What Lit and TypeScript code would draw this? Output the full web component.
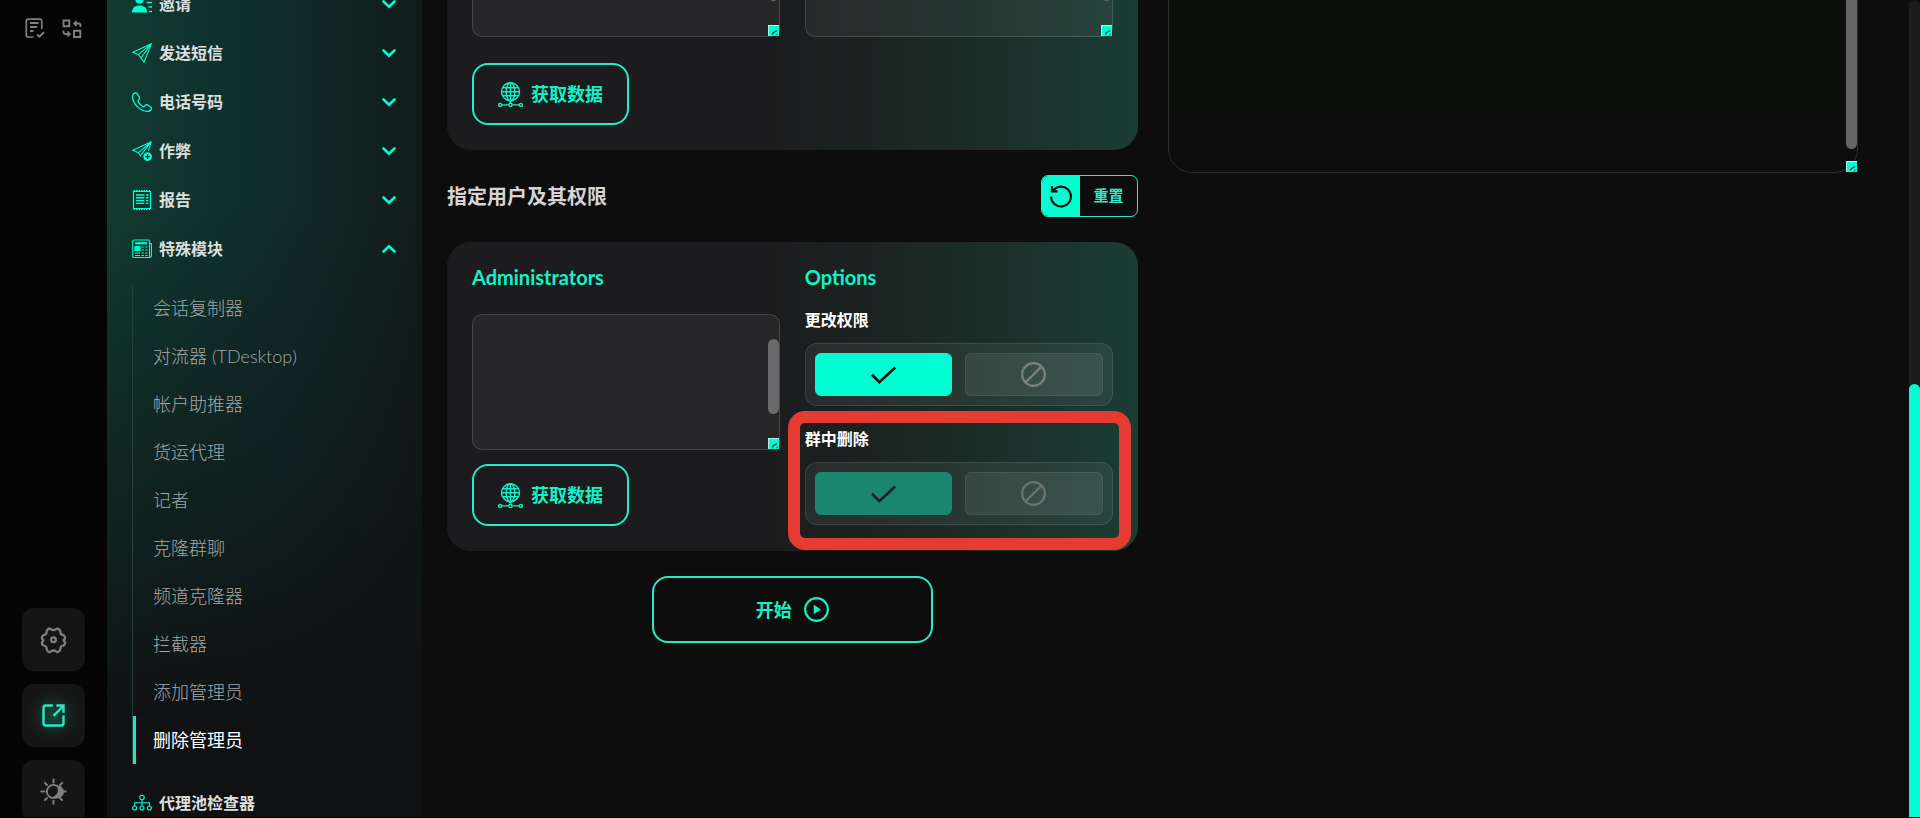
import { LitElement, html, css, svg, nothing } from "lit";
import { customElement, property, state } from "lit/decorators.js";
import { classMap } from "lit/directives/class-map.js";

const icons: Record<string, unknown> = {
  invite: svg`<g fill="currentColor" stroke="none"><circle cx="7.5" cy="5.5" r="4.2"/><path d="M0 18.500C0 13.600 3 11.600 7.500 11.600s7.500 2 7.500 6.900z"/></g><path d="M14.500 8.500H20M16.500 13H20M17 17.500h3" stroke-width="1.6"/>`,
  plane: svg`<path d="M19.400.700.800 9.200l5.600 2.500 5.600 7.500zM19.400.700 6.400 11.700M19.400.700 9 14.900"/>`,
  phone: svg`<path stroke-width="1.300" d="M3.200.800C1.400 1.200.500 3 .600 4.900c.300 7 7.400 14.100 14.600 14.500 2 .100 3.700-.900 4.200-2.600.200-.800-.100-1.400-.700-1.800l-3.300-2.100c-.7-.4-1.400-.3-2 .3l-.9 1.100c-.5.500-1.200.6-1.800.2-1.800-1.200-3.300-2.800-4.500-4.600-.4-.6-.3-1.300.2-1.800l.8-.9c.6-.6.6-1.300.2-2L4.900 1.400C4.500.8 3.900.6 3.200.8z"/>`,
  planePlus: svg`<path d="M11 8 19.400.700.800 9.200l5.600 2.500 2.800 4M19.400.700 6.400 11.700M19.400.700 9 13.800M19.400.700 16.500 9.500"/><circle cx="15.600" cy="15.600" r="4.300" fill="currentColor" stroke="none"/><path d="M15.600 13.300v4.600M13.300 15.600h4.600" stroke="#11302d" stroke-width="1.300"/>`,
  report: svg`<path d="M1.500 1.500h17v17h-17z" stroke-width="1.2"/><path d="M1.500 1h17M1.500 19h17" stroke-width="2" stroke-dasharray="1.500 1"/><path d="M4 5h8.500M4 7.800h8.500M4 10.600h8.500M4 13.400h8.500M14 5h2.500M14 7.800h2.500M14 10.600h2.500M14 13.400h2.500" stroke-width="1.400"/>`,
  news: svg`<path d="M2 1h14.500q1 0 1 1v16.500H2q-1.300 0-1.300-1.300V2.300Q.700 1 2 1zM17.500 4.500h1.900v12.800q0 1.200-1.900 1.200"/><path d="M3.200 4.300h11.900" stroke-width="2.200"/><path d="M3 7.500h5v4H3z" fill="currentColor"/><path d="M9.500 8h2.300M13.200 8h2.300M9.500 11h2.300M13.200 11h2.300M3 14h5M9.500 14h2.300M13.200 14h2.300M3 16.500h5M9.500 16.500h2.300M13.200 16.500h2.300"/>`,
  tree: svg`<circle cx="10" cy="4.500" r="2.200"/><circle cx="2.600" cy="15" r="2"/><circle cx="10" cy="15" r="2"/><circle cx="17.400" cy="15" r="2"/><path d="M10 6.700V13M2.600 13V9.700h14.800V13"/>`,
  down: svg`<path d="m4.500 7.500 5.500 5.300 5.500-5.300" stroke-width="2.600" stroke-linecap="round"/>`,
  up: svg`<path d="m4.500 12.500 5.500-5.300 5.500 5.300" stroke-width="2.600" stroke-linecap="round"/>`,
  doc: svg`<path d="M8.500 19H3.200Q1.300 19 1.300 17V3.200Q1.300 1.200 3.200 1.200h11.600q2 0 2 2V11" stroke-width="1.700"/><path d="M5 5h8.500M5 9h7M5 13h3.500" stroke-width="1.800"/><path d="m12 16.500 2.300 2.200 4.700-4.500" stroke-width="1.900"/>`,
  swap: svg`<path d="M1.500 2.500h5.800v5.800H1.500zM12 12.700h6.300V19H12z" stroke-width="1.900"/><path d="M18.500 9V7.500q0-2-2-2h-4M14.500 3.200l-2.300 2.300 2.300 2.300M1.500 12.500V14q0 2 2 2h4M5.600 13.500 7.900 16l-2.300 2.300" stroke-width="1.800"/>`,
  gear: svg`<path d="M6 1.500Q7 1 8 1.800q2 1.400 4 0 1-.8 2-.3 1.600.8 1.500 2.400 0 1.900 1.900 2.400 1.500.4 1.900 2 .2 1-.7 1.700-.9.700 0 1.400.9.700.7 1.700-.400 1.600-1.900 1.900-1.900.400-1.900 2.300.1 1.700-1.500 2.500-1 .5-2-.3-2-1.400-4 0-1 .8-2 .3-1.600-.8-1.500-2.500 0-1.900-1.900-2.300-1.500-.3-1.900-1.900-.2-1 .7-1.700.9-.7 0-1.400-.9-.7-.7-1.700.4-1.600 1.900-2 1.900-.5 1.900-2.400Q4.400 2.300 6 1.500z" stroke-width="1.800"/><circle cx="10" cy="10.200" r="1.900" stroke-width="1.800"/>`,
  external: svg`<path d="M9.500 2H3.800Q2 2 2 3.800v12.400Q2 18 3.800 18h12.400q1.800 0 1.800-1.800V10M10 10.300 17.500 2.800M12.300 2H18v5.700" stroke-width="1.900"/>`,
  theme: svg`<circle cx="10" cy="10" r="5.300" stroke-width="1.500"/><path d="M12 5.500a5 5 0 1 1-2.200 8.400A5 5 0 0 0 12 5.500z" fill="currentColor" stroke="none"/><path d="M10 .300v2.400M10 17.300v2.400M.300 10h2.400M17.300 10h2.400M3.100 3.100l1.700 1.700M15.200 15.200l1.700 1.700M3.100 16.900l1.700-1.700M15.200 4.800l1.700-1.700" stroke-width="1.600" stroke-linecap="round"/>`,
  globe: svg`<g stroke-width="1.150"><circle cx="10" cy="7.800" r="7.200"/><ellipse cx="10" cy="7.800" rx="3.500" ry="7.200"/><path d="M10 .600v16M2.800 7.800h14.400M4 4.600h12M4 11h12M2.800 18.300h5.500M11.700 18.300h5.500"/><circle cx="1.700" cy="18.300" r="1.200"/><circle cx="10" cy="18.300" r="1.300"/><circle cx="18.300" cy="18.300" r="1.200"/></g>`,
  reset: svg`<path d="M1 10.500A9 9 0 1 0 4 3.800L2 5.500M1.800.800v5h5" stroke-width="2"/>`,
  check: svg`<path d="m.800 10.200 5.900 5.900L19.300 4.400" stroke-width="2.100"/>`,
  ban: svg`<circle cx="10" cy="10" r="9.100" stroke-width="1.800"/><path d="M3.700 16.300 16.300 3.700" stroke-width="1.800"/>`,
  play: svg`<circle cx="10" cy="10" r="9.100" stroke-width="1.700"/><path d="M7.800 6.200 13.600 10l-5.800 3.800z" fill="currentColor" stroke="none"/>`,
};

const icon = (name: string, size = "s20") =>
  html`<svg class="icon ${size}" viewBox="0 0 20 20" fill="none" stroke="currentColor" stroke-width="1.100" aria-hidden="true">${icons[name]}</svg>`;

const base = css`
  :host {
    --accent: #00ffd2;
    --font: Lato, "Noto Sans CJK SC", sans-serif;
  }
  * { box-sizing: border-box; }
  button, textarea { font: inherit; color: inherit; margin: 0; }
  button { cursor: pointer; }
  .icon { display: block; flex: none; overflow: visible; }
  .s20 { width: 20px; height: 20px; }
  .s22 { width: 22px; height: 22px; }
  .s25 { width: 25px; height: 25px; }
`;

@customElement("side-rail")
class SideRail extends LitElement {
  static styles = [base, css`
    :host {
      display: flex; flex-direction: column; justify-content: space-between;
      width: 107px; flex: none; background: #050505; color: #808080; overflow: hidden;
    }
    .top { display: flex; gap: 17px; padding: 18px 25px; }
    .plain { display: block; background: none; border: 0; padding: 0; }
    .tiles { display: flex; flex-direction: column; align-items: center; gap: 13px; margin-bottom: -6px; }
    .tile {
      width: 63px; height: 63px; border: 0; border-radius: 12px; background: #151515; padding: 0;
      display: grid; place-items: center;
    }
    .active { color: #2fe8c4; background: radial-gradient(circle, #14483d 0, #151a19 48%, #151515 65%); }
  `];
  render() {
    return html`
      <div class="top">
        <button class="plain" aria-label="任务">${icon("doc")}</button>
        <button class="plain" aria-label="切换">${icon("swap")}</button>
      </div>
      <div class="tiles">
        <button class="tile" aria-label="设置">${icon("gear", "s25")}</button>
        <button class="tile active" aria-label="打开">${icon("external", "s25")}</button>
        <button class="tile" aria-label="主题">${icon("theme", "s25")}</button>
      </div>`;
  }
}

@customElement("side-menu")
class SideMenu extends LitElement {
  private sections = [
    { icon: "invite", label: "邀请" },
    { icon: "plane", label: "发送短信" },
    { icon: "phone", label: "电话号码" },
    { icon: "planePlus", label: "作弊" },
    { icon: "report", label: "报告" },
  ];
  private modules = ["会话复制器", "对流器 (TDesktop)", "帐户助推器", "货运代理", "记者", "克隆群聊", "频道克隆器", "拦截器", "添加管理员", "删除管理员"];
  @state() private current = "删除管理员";

  static styles = [base, css`
    :host {
      display: block; width: 315px; flex: none; overflow: hidden;
      background:
        linear-gradient(180deg, rgba(15, 17, 19, 0) 25%, rgba(15, 17, 19, .65) 68%, #0f1113 90%),
        linear-gradient(90deg, #113b31, #102c2a 55%, #111c1a);
    }
    .nav { margin-top: -21px; padding: 0 23px 0 25px; }
    .section {
      display: flex; align-items: center; gap: 7px; width: 100%; height: 49px;
      padding: 0; border: 0; background: none; color: #dcdfde; text-align: left;
      font: 700 16px/24px var(--font);
    }
    .section .icon { color: var(--accent); }
    .name { flex: 1; }
    .list { margin: 11px 0 14px; padding: 0; list-style: none; border-left: 1px solid #25403a; }
    .link {
      display: flex; align-items: center; height: 48px; padding-left: 17px; border-left: 3px solid transparent;
      color: #a3a9a8; text-decoration: none; font: 300 18px/24px var(--font);
    }
    .current { color: #fff; border-left-color: #1fe8c2; font-weight: 400; }
  `];
  private section(name: string, label: string, arrow?: string) {
    return html`<button class="section">${icon(name)}<span class="name">${label}</span>${arrow ? icon(arrow) : nothing}</button>`;
  }
  render() {
    return html`<nav class="nav">
      ${this.sections.map((s) => this.section(s.icon, s.label, "down"))}
      ${this.section("news", "特殊模块", "up")}
      <ul class="list">
        ${this.modules.map((m) => html`<li><a href="#" class=${classMap({ link: true, current: m === this.current })}
          @click=${(e: Event) => { e.preventDefault(); this.current = m; }}>${m}</a></li>`)}
      </ul>
      ${this.section("tree", "代理池检查器")}
    </nav>`;
  }
}

@customElement("text-pane")
class TextPane extends LitElement {
  @property() label = "";
  @property({ reflect: true }) kind = "field";

  static styles = [base, css`
    :host { display: grid; position: relative; }
    .area {
      display: block; width: 100%; height: 136px; resize: none; padding: 12px; outline: 0; overflow: hidden;
      border: 1px solid rgba(255, 255, 255, .14); border-radius: 10px;
      background: rgba(255, 255, 255, .05); color: #fff; font: 400 16px/24px var(--font);
    }
    .thumb { position: absolute; right: 1px; top: 25px; width: 11px; height: 75px; border-radius: 6px; background: #6a696b; }
    .grip {
      position: absolute; right: 1px; bottom: 1px; width: 11px; height: 11px; display: block;
      background: #00ffd2; border: 1px solid #9ffbe9; border-width: 1px 0 0 1px;
    }
    :host([kind="log"]) .area {
      height: 297px; border-radius: 24px; border-color: #2c2c2c;
      background: linear-gradient(180deg, #0b0f0b 70%, #0d0d0d 90%);
    }
    :host([kind="log"]) .thumb { height: 248px; background: #656565; }
  `];
  render() {
    return html`
      <textarea class="area" aria-label=${this.label}></textarea>
      <span class="thumb"></span>
      <svg class="grip" viewBox="0 0 10 10" fill="none" stroke="#0b4a40" stroke-width="1.400" aria-hidden="true"><path d="M3.500 8.500 4 7l4-2.500M7.500 8.500h1"/></svg>`;
  }
}

@customElement("choice-toggle")
class ChoiceToggle extends LitElement {
  @property() label = "";
  @property({ type: Boolean, reflect: true }) dim = false;
  @state() private on = true;

  static styles = [base, css`
    :host { display: grid; gap: 14px; }
    .label { color: #fff; font: 700 16px/18px var(--font); }
    .group {
      display: grid; grid-template-columns: 1fr 1fr; gap: 13px; padding: 9px; height: 63px;
      border: 1px solid rgba(255, 255, 255, .1); border-radius: 12px; background: rgba(255, 255, 255, .06);
    }
    .option {
      display: grid; place-items: center; padding: 0; border-radius: 6px;
      border: 1px solid rgba(255, 255, 255, .07); background: rgba(255, 255, 255, .08); color: #7a817f;
    }
    .chosen { background: var(--accent); border-color: var(--accent); color: #0a0f0e; }
    :host([dim]) .chosen { background: #1b8670; border-color: #1b8670; color: #12211f; }
    :host([dim]) .option:not(.chosen) { color: #6c7371; }
  `];
  private option(value: boolean, name: string, text: string) {
    return html`<button class=${classMap({ option: true, chosen: this.on === value })} aria-label=${text}
      aria-pressed=${this.on === value} @click=${() => (this.on = value)}>${icon(name, "s25")}</button>`;
  }
  render() {
    return html`<span class="label" id="label">${this.label}</span>
      <div class="group" role="group" aria-labelledby="label">
        ${this.option(true, "check", "开")}${this.option(false, "ban", "关")}
      </div>`;
  }
}

@customElement("app-root")
class AppRoot extends LitElement {
  static styles = [base, css`
    :host {
      display: flex; height: 100vh; overflow: hidden; background: #0d0d0e; color: #dcdcdc;
      border-bottom: 1px solid #000; box-sizing: border-box; font-family: var(--font);
    }
    .page { flex: 1; min-width: 0; overflow: hidden; padding: 0 51px 0 25px; }
    .columns { display: grid; grid-template-columns: 1fr 1fr; gap: 30px; align-items: start; margin-top: -124px; }
    .stack { display: grid; gap: 25px; }
    .card {
      display: grid; grid-template-columns: 1fr 1fr; column-gap: 25px; row-gap: 26px; align-items: start;
      padding: 25px; border-radius: 24px; background: linear-gradient(90deg, #1c1b1d 46%, #1b2925 70%, #1b3d34);
    }
    .heading { display: flex; align-items: center; justify-content: space-between; }
    .title { margin: 0; color: #d6d4d8; font: 700 20px/28px var(--font); }
    .reset {
      display: flex; align-items: stretch; height: 42px; padding: 0; overflow: hidden;
      border: 1px solid #2fe8c6; border-radius: 7px; background: none;
    }
    .reset-icon { display: grid; place-items: center; width: 38px; background: var(--accent); color: #07100e; }
    .reset-text { padding: 0 13px; color: #2bebc8; font: 700 15px/38px var(--font); }
    .field { display: grid; }
    .caption { margin: 0; color: #12f2c6; font: 700 20px/20px var(--font); }
    .field .caption { margin-bottom: 27px; }
    .action {
      display: flex; align-items: center; justify-content: center; gap: 8px; height: 62px; padding: 0 24px;
      justify-self: start; border: 2px solid #25ecc9; border-radius: 16px; background: none;
      color: #12f2c8; font: 700 18px/26px var(--font);
    }
    .field .action { margin-top: 14px; }
    .start { justify-self: center; width: 281px; height: 67px; gap: 12px; }
    .options { display: grid; gap: 24px; }
    .marked { position: relative; }
    .marker {
      position: absolute; inset: -19px -18px -25px -17px; pointer-events: none;
      border: 12px solid #e53b30; border-radius: 17px;
    }
    .track { width: 11px; flex: none; display: flex; align-items: flex-end; background: #1c1c1c; border-radius: 6px 6px 0 0; }
    .handle { width: 100%; height: 53%; background: var(--accent); border-radius: 6px 6px 0 0; }
  `];
  private fetchButton() {
    return html`<button class="action">${icon("globe", "s25")}<span>获取数据</span></button>`;
  }
  render() {
    return html`
      <side-rail></side-rail>
      <side-menu></side-menu>
      <main class="page">
        <div class="columns">
          <div class="stack">
            <section class="card">
              <text-pane label="来源"></text-pane>
              <text-pane label="数据"></text-pane>
              ${this.fetchButton()}
            </section>
            <div class="heading">
              <h2 class="title">指定用户及其权限</h2>
              <button class="reset"><span class="reset-icon">${icon("reset", "s22")}</span><span class="reset-text">重置</span></button>
            </div>
            <section class="card">
              <div class="field">
                <h3 class="caption">Administrators</h3>
                <text-pane label="Administrators"></text-pane>
                ${this.fetchButton()}
              </div>
              <div class="options">
                <h3 class="caption">Options</h3>
                <choice-toggle label="更改权限"></choice-toggle>
                <div class="marked">
                  <choice-toggle label="群中删除" dim></choice-toggle>
                  <div class="marker"></div>
                </div>
              </div>
            </section>
            <button class="action start"><span>开始</span>${icon("play", "s25")}</button>
          </div>
          <text-pane kind="log" label="日志"></text-pane>
        </div>
      </main>
      <div class="track" aria-hidden="true"><div class="handle"></div></div>`;
  }
}
